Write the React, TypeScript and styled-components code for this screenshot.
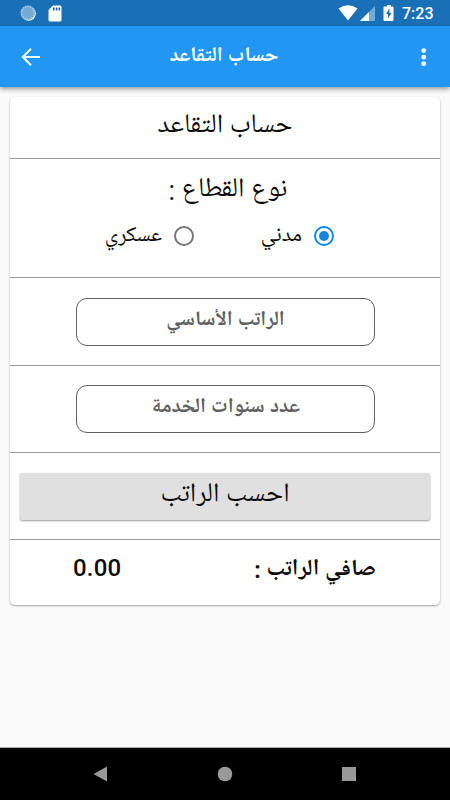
import React from 'react';
import styled, { createGlobalStyle } from 'styled-components';

const GlobalStyle = createGlobalStyle`
  * { box-sizing: border-box; }
  body { margin: 0; background: #fafafa; }
`;

const Screen = styled.div`
  width: 450px;
  height: 800px;
  display: flex;
  flex-direction: column;
  background: #fafafa;
  color: #0c0c0c;
  font-family: Roboto, 'Noto Naskh Arabic UI', 'Noto Naskh Arabic', 'Noto Sans', sans-serif;
  overflow: hidden;
`;

const StatusBar = styled.header`
  height: 26px;
  display: flex;
  align-items: center;
  justify-content: space-between;
  padding: 0 17px 0 20px;
  background: #1a70b7;
  color: #fff;
`;

const StatusGroup = styled.div<{ $gap: number }>`
  display: flex;
  align-items: center;
  gap: ${p => p.$gap}px;
`;

const Clock = styled.span`
  font-size: 16px;
  font-weight: 500;
  line-height: 26px;
  padding-top: 2px;
  width: 31px;
  white-space: nowrap;
`;

const AppBar = styled.nav`
  height: 61px;
  flex: none;
  display: flex;
  align-items: center;
  justify-content: space-between;
  padding: 0 17px 0 19px;
  background: #2196f3;
  color: #fff;
  box-shadow: 0 2px 5px rgba(0, 0, 0, 0.4);
`;

const Text = styled.span<{ $size: number; $bold?: boolean; $line?: number }>`
  display: block;
  direction: rtl;
  text-align: center;
  white-space: nowrap;
  font-size: ${p => p.$size}px;
  font-weight: ${p => (p.$bold ? 700 : 400)};
  line-height: ${p => p.$line ?? 40}px;
`;

const AppTitle = styled(Text)`
  padding-top: 1px;
  margin-right: 8px;
`;

const Card = styled.main`
  width: 430px;
  height: 508px;
  flex: none;
  margin: 10px 10px 0;
  background: #fff;
  border-radius: 5px;
  box-shadow: 0 1px 2px rgba(0, 0, 0, 0.36);
`;

const Section = styled.section<{ $height: number; $top: number; $last?: boolean }>`
  height: ${p => p.$height}px;
  padding-top: ${p => p.$top}px;
  border-bottom: ${p => (p.$last ? 'none' : '1px solid #9b9b9b')};
`;

const SectorTitle = styled(Text)`
  padding-left: 6px;
`;

const Options = styled.div`
  direction: rtl;
  display: flex;
  gap: 67px;
  height: 40px;
  padding-right: 106px;
  margin-top: 5px;
`;

const Option = styled.label<{ $width: number }>`
  display: flex;
  align-items: center;
  gap: 12px;
  width: ${p => p.$width}px;
`;

const OptionLabel = styled(Text)`
  padding-top: 2px;
`;

const Radio = styled.span<{ $on?: boolean }>`
  width: 20px;
  height: 20px;
  flex: none;
  border: 2px solid ${p => (p.$on ? '#1684e3' : '#757575')};
  border-radius: 50%;
  padding: 3px;
  &::after {
    content: '';
    display: block;
    width: 10px;
    height: 10px;
    border-radius: 50%;
    background: ${p => (p.$on ? '#1684e3' : 'transparent')};
  }
`;

const Field = styled.div`
  width: 299px;
  height: 48px;
  margin: 0 0 0 66px;
  border: 1px solid #626262;
  border-radius: 11px;
  color: #606060;
`;

const Button = styled.div`
  width: 410px;
  height: 47px;
  margin: 0 auto;
  border-radius: 2px;
  background: #e0e0e0;
  box-shadow: 0 1px 2px rgba(0, 0, 0, 0.4);
`;

const Result = styled.div`
  display: flex;
  justify-content: space-between;
  padding: 0 64px 0 63px;
`;

const Amount = styled.span`
  font-size: 24px;
  font-weight: 500;
  line-height: 40px;
  letter-spacing: 0.2px;
`;

const SystemNav = styled.footer`
  height: 53px;
  margin-top: auto;
  flex: none;
  display: flex;
  align-items: center;
  justify-content: space-between;
  padding: 0 94px 0 93px;
  border-top: 1px solid #aaa;
  background: #000;
`;

export default function App() {
  return (
    <>
      <GlobalStyle />
      <Screen>
        <StatusBar>
          <StatusGroup $gap={12}>
            <svg width="16" height="16" viewBox="0 0 16 16">
              <circle cx="8.6" cy="8.6" r="7.2" fill="#fff" />
              <circle cx="7.8" cy="7.8" r="7.3" fill="#75a9d3" />
              <circle cx="7.8" cy="7.8" r="6.3" fill="none" stroke="#b4d0e7" strokeWidth="1.5" strokeDasharray="1.2 1.2" />
            </svg>
            <svg width="14" height="17" viewBox="0 0 14 17">
              <path d="M5 .5h7a1.5 1.5 0 0 1 1.5 1.5v13a1.5 1.5 0 0 1-1.5 1.5H2A1.5 1.5 0 0 1 .5 15V5Z" fill="#fff" />
              <path d="M5 2.5h1.5v3H5zM7.8 2.5h1.5v3H7.8zM10.5 2.5H12v3h-1.5z" fill="#1a5ba6" />
            </svg>
          </StatusGroup>
          <StatusGroup $gap={0}>
            <svg width="64" height="18" viewBox="0 0 64 18">
              <path d="M.5 4.5Q10 -1.8 19.5 4.5L10 16.5Z" fill="#fff" />
              <path d="M37 2v15H22Z" fill="#75a9d3" />
              <path d="M31 8v9h-9Z" fill="#fff" />
              <path d="M49 1h4v1.5h1.5A1 1 0 0 1 55.5 3.5V16a1 1 0 0 1-1 1h-8a1 1 0 0 1-1-1V3.5a1 1 0 0 1 1-1H49Z" fill="#fff" />
              <path d="m51.5 4.5-3.5 5.5h2v4.500l3.500-5.500h-2Z" fill="#1a70b7" />
            </svg>
            <Clock>7:23</Clock>
          </StatusGroup>
        </StatusBar>
        <AppBar>
          <svg width="24" height="24" viewBox="0 0 24 24" fill="none" stroke="#fff" strokeWidth="2">
            <path d="M21 12H4M12 3.8 3.8 12l8.2 8.2" />
          </svg>
          <AppTitle $size={20.8} $bold>حساب التقاعد</AppTitle>
          <svg width="20" height="24" viewBox="0 0 20 24" fill="#fff">
            <circle cx="10.7" cy="5.6" r="2.4" />
            <circle cx="10.7" cy="12.2" r="2.4" />
            <circle cx="10.7" cy="18.7" r="2.4" />
          </svg>
        </AppBar>
        <Card>
          <Section $height={62} $top={7}>
            <Text $size={27} $line={46}>حساب التقاعد</Text>
          </Section>
          <Section $height={119} $top={12}>
            <SectorTitle $size={27}>نوع القطاع :</SectorTitle>
            <Options>
              <Option $width={73}>
                <Radio $on />
                <OptionLabel $size={21.8}>مدني</OptionLabel>
              </Option>
              <Option $width={90}>
                <Radio />
                <OptionLabel $size={21.6}>عسكري</OptionLabel>
              </Option>
            </Options>
          </Section>
          <Section $height={88} $top={20}>
            <Field><Text $size={20.7} $bold $line={44}>الراتب الأساسي</Text></Field>
          </Section>
          <Section $height={87} $top={19}>
            <Field><Text $size={20.9} $bold $line={44}>عدد سنوات الخدمة</Text></Field>
          </Section>
          <Section $height={87} $top={20}>
            <Button><Text $size={27} $line={46}>احسب الراتب</Text></Button>
          </Section>
          <Section $height={65} $top={8} $last>
            <Result>
              <Amount>0.00</Amount>
              <Text $size={23.2} $bold $line={44}>صافي الراتب :</Text>
            </Result>
          </Section>
        </Card>
        <SystemNav>
          <svg width="14" height="16" viewBox="0 0 14 16"><path d="M14 .5v15L.5 8Z" fill="#999" /></svg>
          <svg width="16" height="16" viewBox="0 0 16 16"><circle cx="8" cy="8" r="7.3" fill="#999" /></svg>
          <svg width="14" height="14" viewBox="0 0 14 14"><path d="M0 0h14v14H0z" fill="#999" /></svg>
        </SystemNav>
      </Screen>
    </>
  );
}
